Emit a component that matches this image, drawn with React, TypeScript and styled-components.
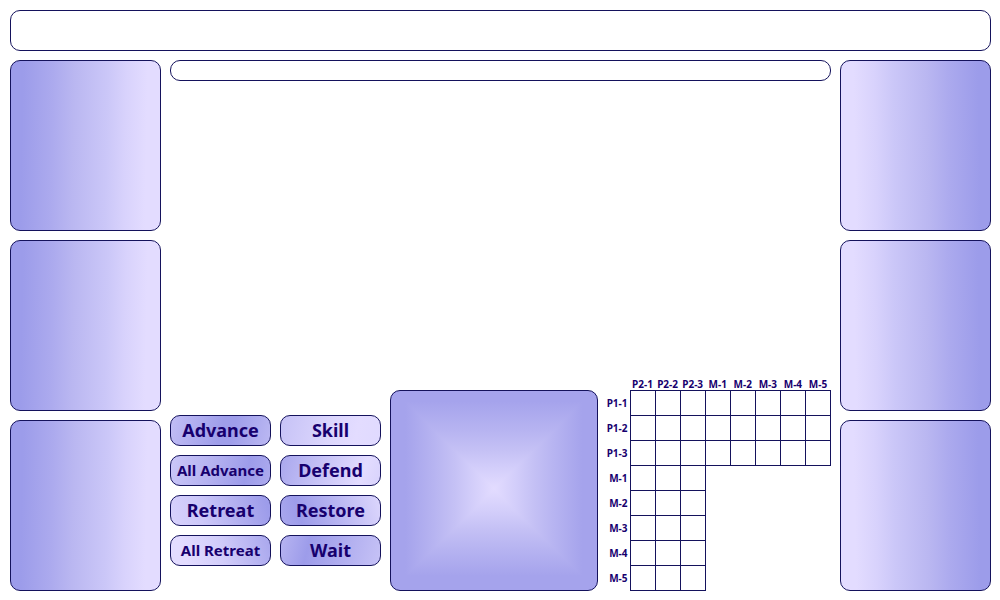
import React from "react";
import styled, { createGlobalStyle } from "styled-components";

const LINE = "#14125c";
const INK = "#17006e";
const DARK = "#9c9cea";
const LIGHT = "#e3dcff";

const GlobalStyle = createGlobalStyle`
  *, *::before, *::after { box-sizing: border-box; }
  body {
    margin: 0;
    background: #fff;
    color: ${INK};
    font-family: "Noto Sans", "Open Sans", sans-serif;
  }
`;

const Page = styled.div`
  display: flex;
  flex-direction: column;
  gap: 9px;
  min-height: 100vh;
  padding: 10px 9px 9px 10px;
`;

const TopBar = styled.header`
  height: 41px;
  border: 1px solid ${LINE};
  border-radius: 10px;
`;

const Body = styled.div`
  flex: 1;
  display: grid;
  grid-template-columns: 151px minmax(0, 1fr) 151px;
  gap: 9px;
`;

const Side = styled.aside`
  display: flex;
  flex-direction: column;
  gap: 9px;
`;

const Panel = styled.section<{ $angle: number }>`
  flex: 1;
  border: 1px solid ${LINE};
  border-radius: 10px;
  background: linear-gradient(
    ${(p) => p.$angle}deg,
    ${DARK} 8%,
    #acaaee 28%,
    #bab7f1 42%,
    #cbc7f8 64%,
    #d8d2fc 76%,
    ${LIGHT} 90%
  );
`;

const Center = styled.main`
  display: flex;
  flex-direction: column;
`;

const StatusBar = styled.div`
  height: 21px;
  border: 1px solid ${LINE};
  border-radius: 10px;
`;

const Field = styled.div`
  flex: 1;
`;

const Console = styled.div`
  display: flex;
  align-items: flex-end;
  gap: 9px;
`;

const Commands = styled.div`
  display: grid;
  grid-template-columns: 101px 101px;
  grid-auto-rows: 31px;
  gap: 9px;
  padding-bottom: 25px;
`;

const Command = styled.button<{ $fill: string; $small?: boolean }>`
  padding: 0 0 2px;
  border: 1px solid ${LINE};
  border-radius: 10px;
  background: linear-gradient(${(p) => p.$fill});
  color: inherit;
  font-family: inherit;
  font-size: ${(p) => (p.$small ? 15 : 18)}px;
  font-weight: 700;
  line-height: 20px;
  white-space: nowrap;
  cursor: pointer;
`;

/* Two mirrored ramps darkened together form the square glow. */
const Arena = styled.section`
  flex: 1;
  height: 201px;
  border: 1px solid ${LINE};
  border-radius: 10px;
  background:
    linear-gradient(90deg, #a5a3ec 7%, #b7b4f1 21%, #c5c1f5 31%, #d2cdfa 39%, ${LIGHT} 50%, #d2cdfa 61%, #c5c1f5 69%, #b7b4f1 79%, #a5a3ec 93%),
    linear-gradient(180deg, #a5a3ec 5%, #b7b4f1 20%, #c5c1f5 30%, #d2cdfa 38%, ${LIGHT} 49%, #d2cdfa 61%, #c5c1f5 69%, #b7b4f1 79%, #a5a3ec 93%);
  background-blend-mode: darken;
`;

const Matrix = styled.table`
  table-layout: fixed;
  width: 226px;
  margin-left: -2px;
  border-collapse: collapse;
  font-size: 10px;
  font-weight: 700;
  line-height: 12px;
`;

const LabelCol = styled.col`
  width: 25px;
`;

const ColumnHead = styled.th`
  height: 12px;
  padding: 0;
  white-space: nowrap;
`;

const RowHead = styled.th`
  height: 25px;
  padding: 0 2px 0 0;
  text-align: right;
  white-space: nowrap;
`;

const Cell = styled.td<{ $open: boolean }>`
  height: 25px;
  padding: 0;
  border: ${(p) => (p.$open ? `1px solid ${LINE}` : "none")};
`;

const commands = [
  { name: "Advance", fill: "105deg, #c2bef5, #9f9eea 50%, #9f9eea 62%, #bbb8f2" },
  { name: "Skill", fill: "105deg, #c6c2f6, #dcd6fd 50%, #e3dcff 75%, #e0daff" },
  { name: "All Advance", small: true, fill: "105deg, #cbc7f8, #b5b2f0 40%, #9d9cea 75%, #adabee" },
  { name: "Defend", fill: "110deg, #a9a7ed, #c6c2f6 40%, #e3dcff 80%, #d8d2fc" },
  { name: "Retreat", fill: "75deg, #d8d2fc, #cdc8f9 30%, #b3b0f0 65%, #9d9cea 95%" },
  { name: "Restore", fill: "75deg, #a9a7ed, #9d9cea 20%, #b7b4f1 55%, #dcd6fd" },
  { name: "All Retreat", small: true, fill: "75deg, #e3dcff 15%, #d2cdfa 50%, #a9a7ed" },
  { name: "Wait", fill: "105deg, #b7b4f1, #9d9cea 28%, #a9a7ed 50%, #c6c2f6" },
];

const columns = ["P2-1", "P2-2", "P2-3", "M-1", "M-2", "M-3", "M-4", "M-5"];
const rows = ["P1-1", "P1-2", "P1-3", "M-1", "M-2", "M-3", "M-4", "M-5"];

export default function App() {
  return (
    <>
      <GlobalStyle />
      <Page>
        <TopBar />
        <Body>
          <Side>
            {[0, 1, 2].map((n) => (
              <Panel key={n} $angle={91} />
            ))}
          </Side>
          <Center>
            <StatusBar />
            <Field />
            <Console>
              <Commands>
                {commands.map((c) => (
                  <Command key={c.name} type="button" $fill={c.fill} $small={c.small}>
                    {c.name}
                  </Command>
                ))}
              </Commands>
              <Arena />
              <Matrix>
                <colgroup>
                  <LabelCol />
                  {columns.map((c) => (
                    <col key={c} />
                  ))}
                </colgroup>
                <thead>
                  <tr>
                    <td />
                    {columns.map((c) => (
                      <ColumnHead key={c} scope="col">
                        {c}
                      </ColumnHead>
                    ))}
                  </tr>
                </thead>
                <tbody>
                  {rows.map((r, y) => (
                    <tr key={r}>
                      <RowHead scope="row">{r}</RowHead>
                      {columns.map((c, x) => (
                        <Cell key={c} $open={y < 3 || x < 3} />
                      ))}
                    </tr>
                  ))}
                </tbody>
              </Matrix>
            </Console>
          </Center>
          <Side>
            {[0, 1, 2].map((n) => (
              <Panel key={n} $angle={269} />
            ))}
          </Side>
        </Body>
      </Page>
    </>
  );
}
